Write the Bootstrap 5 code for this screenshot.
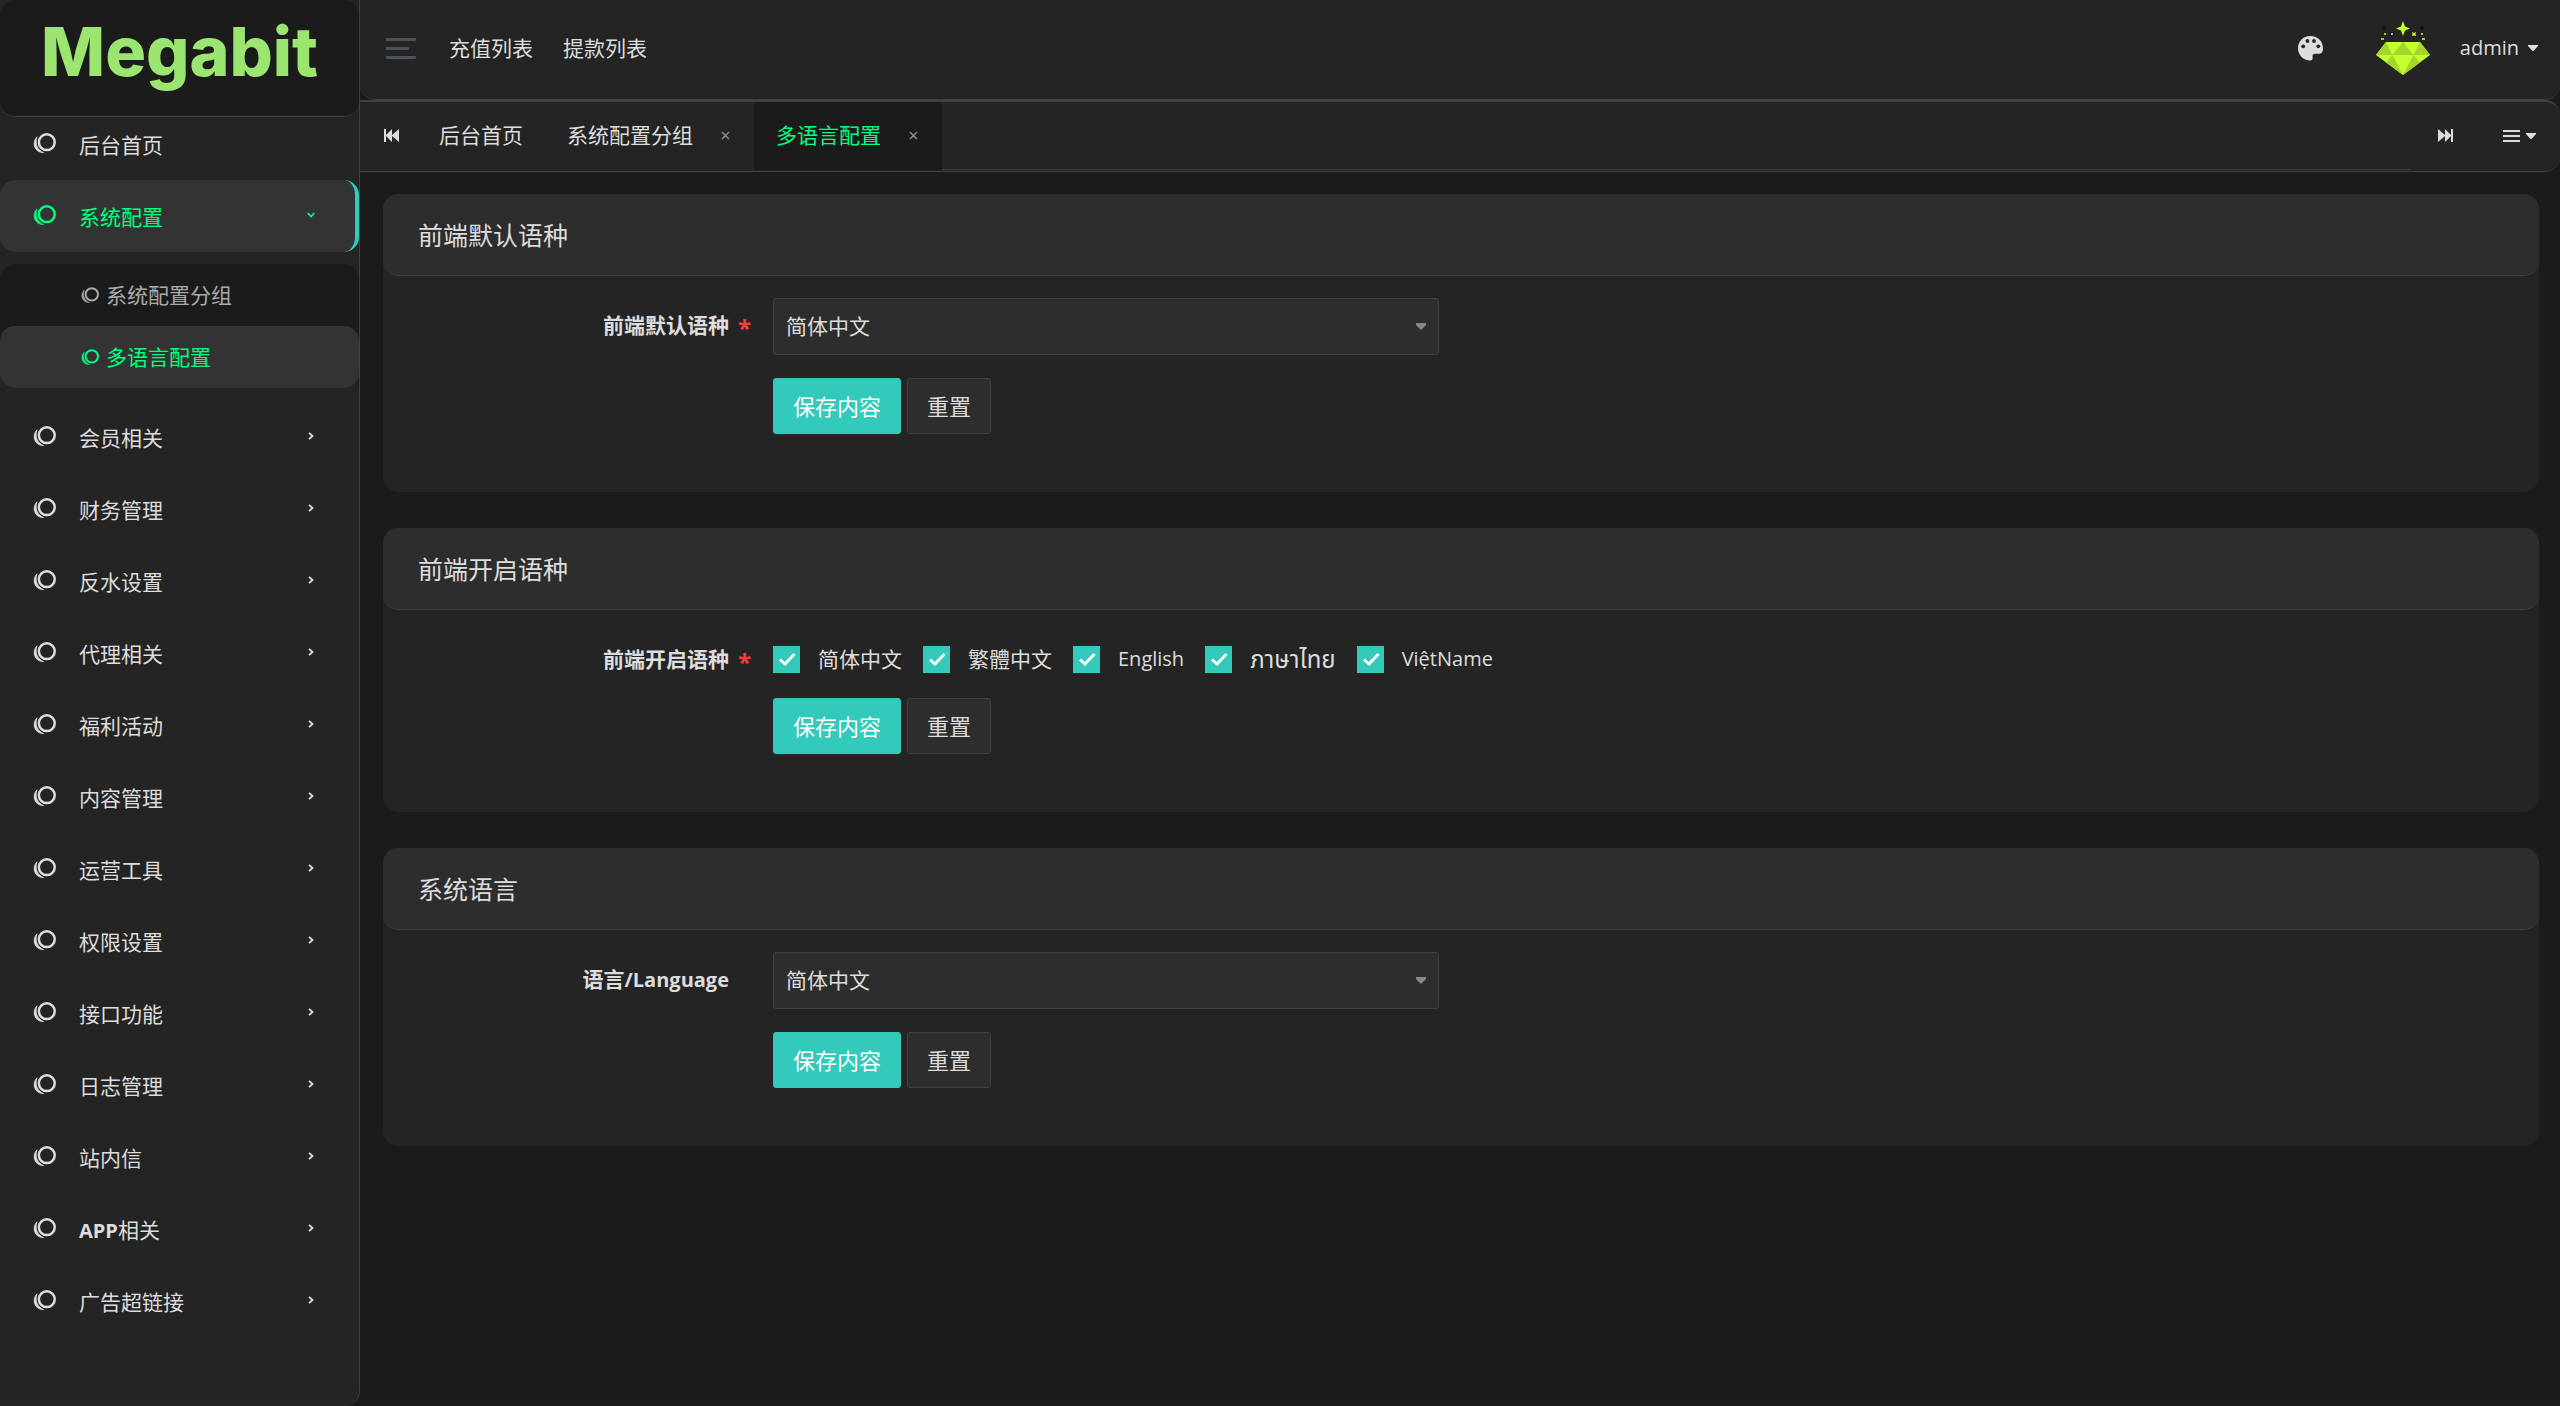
<!DOCTYPE html>
<html lang="zh-CN">
<head>
<meta charset="utf-8">
<meta name="viewport" content="width=device-width, initial-scale=1">
<title>多语言配置</title>
<link href="https://cdn.jsdelivr.net/npm/bootstrap@5.3.0/dist/css/bootstrap.min.css" rel="stylesheet">
<style>
:root{--page:#1b1b1b;--panel:#242424;--raised:#2d2d2d;--active:#333;--line:#404040;--ink:#ddd;--go:#00ff7f;--teal:#33cabb}
body{background:var(--page);color:var(--ink);font:21px/30px "Open Sans","Noto Sans CJK SC","Noto Sans Thai",sans-serif}
a{color:inherit;text-decoration:none}
svg{display:block;flex:none}
.latin{font-size:20px}
.thai{font-size:24px}
.side{width:360px;background:var(--panel);border-right:1px solid var(--line);border-bottom-right-radius:15px}
.brand{height:117px;margin-bottom:-9px;background:var(--page);border-bottom:1px solid var(--line);border-radius:15px;padding:0 0 14px 41px;color:#9be570;font:800 68px/1 Inter,sans-serif}
.menu-link{height:72px;padding:0 40px 2px 33px;border-right:4px solid transparent;border-radius:15px}
.menu-link .latin{font-weight:700}
.menu-link.current{background:var(--active);border-color:var(--teal);color:var(--go)}
.menu-link .label{margin-left:23px;padding-top:4px}
.submenu{background:var(--page);border-radius:15px;margin:12px 0 13px}
.sub-link{height:62px;padding-left:81px;gap:7px;color:#aaa;border-radius:15px}
.sub-link.current{background:var(--active);color:var(--go)}
.topbar{height:100px;background:var(--panel);border-bottom:1px solid var(--line);border-radius:0 0 15px 15px;padding:0 22px 3px 26px}
.top-links{gap:30px;margin-left:33px}
.top-tools{gap:30px}
.theme-link{margin-right:23px}
.user-toggle{gap:9px}
.tabbar{height:72px;background:var(--panel);border-top:2px solid var(--line);border-bottom:1px solid var(--line);border-radius:0 15px 15px 0;padding:0 24px}
.tabbar>.plain-btn{padding-bottom:2px}
.tab-scroll{margin:0 28px 0 18px}
.tab-rest{border-bottom:1px solid var(--line);margin-bottom:1px}
.tab-item{padding:0 22px 3px}
.tab-item.current{background:var(--page);margin-bottom:1px}
.tab-item.current a{color:var(--go)}
.tab-item .tab-close{color:#999;width:13px;margin-left:26px;font-size:18px}
.tab-menu{gap:6px;margin-left:50px}
.plain-btn{background:none;border:0;padding:0;color:inherit}
.panels{padding:22px 21px 36px 23px;gap:36px}
.panel-card{background:var(--panel);border-radius:15px}
.panel-head{height:82px;background:var(--raised);border-bottom:1px solid var(--line);border-radius:15px;padding:0 35px;font-size:25px;font-weight:400;margin:0}
.panel-form{padding:22px 13px 58px}
.panel-form .row{--bs-gutter-x:44px;margin:0}
.field-label{font-weight:700;text-align:right;padding-top:12px;position:relative}
.required-mark{position:absolute;right:0;top:15px;color:#ff3b3b;font-size:24px}
.form-select.lang{height:57px;background-color:var(--raised);border:1px solid var(--line);border-radius:3px;color:var(--ink);font-size:21px;padding:1px 40px 0 12px;background-image:url("data:image/svg+xml,%3Csvg xmlns='http://www.w3.org/2000/svg' viewBox='0 0 10 7'%3E%3Cpath fill='%23888' d='M0 0h10v2L5 7L0 2z'/%3E%3C/svg%3E");background-size:10px 7px;background-position:right 12px center}
.actions{gap:6px;margin-top:23px}
.actions .btn{height:56px;padding:0 19px;border-radius:3px;font-size:22px;line-height:30px}
.btn-save{background:var(--teal);border-color:var(--teal);color:#fff}
.btn-reset{background:var(--raised);border-color:var(--line);color:var(--ink)}
.checks{height:43px;gap:21px}
.check-item{gap:18px;padding-top:11px}
.check-item .form-check-input{width:27px;height:27px;margin:0;border-radius:0;border:0;background-color:#444}
.check-item .form-check-input:checked{background-color:var(--teal);background-size:27px 27px;background-image:url("data:image/svg+xml,%3Csvg xmlns='http://www.w3.org/2000/svg' viewBox='0 0 27 27'%3E%3Cpath fill='none' stroke='%23fff' stroke-width='3' d='M7 13.500l5 4.500L21.500 8'/%3E%3C/svg%3E")}
</style>
</head>
<body>
<svg width="0" height="0" class="position-absolute" aria-hidden="true">
  <symbol id="rings" viewBox="0 0 23 20"><circle cx="13.800" cy="9.200" r="7.900" fill="none" stroke="currentColor" stroke-width="2.500"/><path d="M4 3.800C-1.500 9.500 1 19.500 10.800 19.800C5 17 1.500 11.500 4 3.800Z" fill="currentColor" stroke="currentColor" stroke-width=".7"/></symbol>
  <symbol id="chev" viewBox="0 0 8 8"><path d="M2 .8L5.500 4L2 7.200" fill="none" stroke="currentColor" stroke-width="1.800"/></symbol>
  <symbol id="chev-down" viewBox="0 0 8 8"><path d="M.8 2L4 5.500L7.200 2" fill="none" stroke="currentColor" stroke-width="1.800"/></symbol>
  <symbol id="caret" viewBox="0 0 10 6"><path d="M0 0H10V1L5.500 6H4.500L0 1Z" fill="currentColor"/></symbol>
</svg>
<div class="d-flex min-vh-100">
  <nav class="side flex-shrink-0">
    <a class="brand d-flex align-items-center position-relative" href="#">Megabit</a>
    <a class="menu-link d-flex align-items-center" href="#"><svg width="23" height="20"><use href="#rings"/></svg><span class="label">后台首页</span></a>
    <a class="menu-link current d-flex align-items-center" href="#"><svg width="23" height="20"><use href="#rings"/></svg><span class="label me-auto">系统配置</span><svg width="8" height="8"><use href="#chev-down"/></svg></a>
    <div class="submenu">
      <a class="sub-link d-flex align-items-center" href="#"><svg width="18" height="16"><use href="#rings"/></svg>系统配置分组</a>
      <a class="sub-link current d-flex align-items-center" href="#"><svg width="18" height="16"><use href="#rings"/></svg>多语言配置</a>
    </div>
    <a class="menu-link d-flex align-items-center" href="#"><svg width="23" height="20"><use href="#rings"/></svg><span class="label me-auto">会员相关</span><svg width="8" height="8"><use href="#chev"/></svg></a>
    <a class="menu-link d-flex align-items-center" href="#"><svg width="23" height="20"><use href="#rings"/></svg><span class="label me-auto">财务管理</span><svg width="8" height="8"><use href="#chev"/></svg></a>
    <a class="menu-link d-flex align-items-center" href="#"><svg width="23" height="20"><use href="#rings"/></svg><span class="label me-auto">反水设置</span><svg width="8" height="8"><use href="#chev"/></svg></a>
    <a class="menu-link d-flex align-items-center" href="#"><svg width="23" height="20"><use href="#rings"/></svg><span class="label me-auto">代理相关</span><svg width="8" height="8"><use href="#chev"/></svg></a>
    <a class="menu-link d-flex align-items-center" href="#"><svg width="23" height="20"><use href="#rings"/></svg><span class="label me-auto">福利活动</span><svg width="8" height="8"><use href="#chev"/></svg></a>
    <a class="menu-link d-flex align-items-center" href="#"><svg width="23" height="20"><use href="#rings"/></svg><span class="label me-auto">内容管理</span><svg width="8" height="8"><use href="#chev"/></svg></a>
    <a class="menu-link d-flex align-items-center" href="#"><svg width="23" height="20"><use href="#rings"/></svg><span class="label me-auto">运营工具</span><svg width="8" height="8"><use href="#chev"/></svg></a>
    <a class="menu-link d-flex align-items-center" href="#"><svg width="23" height="20"><use href="#rings"/></svg><span class="label me-auto">权限设置</span><svg width="8" height="8"><use href="#chev"/></svg></a>
    <a class="menu-link d-flex align-items-center" href="#"><svg width="23" height="20"><use href="#rings"/></svg><span class="label me-auto">接口功能</span><svg width="8" height="8"><use href="#chev"/></svg></a>
    <a class="menu-link d-flex align-items-center" href="#"><svg width="23" height="20"><use href="#rings"/></svg><span class="label me-auto">日志管理</span><svg width="8" height="8"><use href="#chev"/></svg></a>
    <a class="menu-link d-flex align-items-center" href="#"><svg width="23" height="20"><use href="#rings"/></svg><span class="label me-auto">站内信</span><svg width="8" height="8"><use href="#chev"/></svg></a>
    <a class="menu-link d-flex align-items-center" href="#"><svg width="23" height="20"><use href="#rings"/></svg><span class="label me-auto"><span class="latin">APP</span>相关</span><svg width="8" height="8"><use href="#chev"/></svg></a>
    <a class="menu-link d-flex align-items-center" href="#"><svg width="23" height="20"><use href="#rings"/></svg><span class="label me-auto">广告超链接</span><svg width="8" height="8"><use href="#chev"/></svg></a>
  </nav>
  <div class="flex-grow-1">
    <header class="topbar d-flex align-items-center">
      <button class="plain-btn" type="button" aria-label="菜单"><svg width="30" height="21" viewBox="0 0 30 21" fill="#4b525a"><rect width="30" height="3" rx="1"/><rect y="9" width="23" height="3" rx="1"/><rect y="18" width="30" height="3" rx="1"/></svg></button>
      <nav class="top-links d-flex"><a href="#">充值列表</a><a href="#">提款列表</a></nav>
      <div class="top-tools d-flex align-items-center ms-auto">
        <a class="theme-link" href="#" aria-label="主题"><svg width="25" height="25" viewBox="0 0 25 25"><path fill="#ddd" d="M12.500 0C5 0 0 5.500 0 12.300S5.500 24.500 12 24.500c2.400 0 2.800-1.200 2.600-2.800c-.4-2.600.2-4 2.500-4H21c2.600 0 4-2 4-5C25 5 19.500 0 12.500 0Z"/><g fill="#242424"><circle cx="5.200" cy="10.300" r="1.900"/><circle cx="9.500" cy="5" r="1.900"/><circle cx="16" cy="5" r="1.900"/><circle cx="20.300" cy="10.300" r="1.900"/></g></svg></a>
        <svg width="54" height="54" viewBox="0 0 54 54" aria-hidden="true">
          <path fill="#c5ff2e" d="M10 21H44L54 34L27 54L0 34Z"/>
          <path fill="#a4d62b" d="M10 21H27L16.500 34ZM27 21H44L37.500 34ZM10 21L0 34H16.500ZM44 21L37.500 34H54ZM10 41.500L16.500 34L27 54ZM44 41.500L37.500 34L27 54Z"/>
          <path fill="#c5ff2e" d="M10 21H27L16.500 34ZM44 21H27L37.500 34Z"/>
          <path fill="#a4d62b" d="M27 21L16.500 34H37.500Z"/>
          <path fill="#c5ff2e" d="M27 0L29 5.500L34 7.500L29 9.500L27 15L25 9.500L20 7.500L25 5.500ZM36 11l2 1l2-1l-.5 2l.5 2l-2-.5l-2 .5l.5-2Z"/>
          <g fill="#9bcc2a"><rect x="8" y="12" width="2" height="2"/><rect x="45" y="12" width="2" height="2"/><rect x="5" y="17" width="3" height="2"/><rect x="46" y="17" width="3" height="2"/></g>
          <path fill="#111" d="M8 4l1 2l2 1l-2 1l-1 2l-1-2l-2-1l2-1ZM46 4l1 2l2 1l-2 1l-1 2l-1-2l-2-1l2-1ZM14 11h4v4h-4Z"/><circle cx="16" cy="13" r="1" fill="#eee"/>
        </svg>
        <button class="plain-btn user-toggle d-flex align-items-center" type="button"><span class="latin">admin</span><svg width="10" height="6"><use href="#caret"/></svg></button>
      </div>
    </header>
    <div class="tabbar d-flex align-items-stretch">
      <button class="plain-btn" type="button" aria-label="向左"><svg width="15" height="13" viewBox="0 0 15 13" fill="#ddd"><path d="M0 0H2V6L8 0V6L15 0V13L8 7V13L2 7V13H0Z"/></svg></button>
      <nav class="tab-scroll d-flex flex-grow-1">
        <a class="tab-item d-flex align-items-center" href="#">后台首页</a>
        <div class="tab-item d-flex align-items-center"><a href="#">系统配置分组</a><button class="plain-btn tab-close" type="button" aria-label="关闭">×</button></div>
        <div class="tab-item current d-flex align-items-center"><a href="#">多语言配置</a><button class="plain-btn tab-close" type="button" aria-label="关闭">×</button></div>
        <div class="tab-rest flex-grow-1"></div>
      </nav>
      <button class="plain-btn" type="button" aria-label="向右"><svg width="15" height="13" viewBox="0 0 15 13" fill="#ddd"><path d="M15 0H13V6L7 0V6L0 0V13L7 7V13L13 7V13H15Z"/></svg></button>
      <button class="plain-btn tab-menu d-flex align-items-center" type="button" aria-label="标签操作"><svg width="17" height="12" viewBox="0 0 17 12" fill="#ddd"><path d="M0 0H17V2H0ZM0 5H17V7H0ZM0 10H17V12H0Z"/></svg><svg width="10" height="6"><use href="#caret"/></svg></button>
    </div>
    <main class="panels d-flex flex-column">
      <section class="panel-card">
        <h2 class="panel-head d-flex align-items-center">前端默认语种</h2>
        <form class="panel-form">
          <div class="row"><label class="col-2 field-label" for="defaultLang">前端默认语种<span class="required-mark">*</span></label>
            <div class="col-4"><select class="form-select lang" id="defaultLang"><option>简体中文</option></select></div></div>
          <div class="row"><div class="col-4 offset-2 actions d-flex"><button class="btn btn-save" type="button">保存内容</button><button class="btn btn-reset" type="reset">重置</button></div></div>
        </form>
      </section>
      <section class="panel-card">
        <h2 class="panel-head d-flex align-items-center">前端开启语种</h2>
        <form class="panel-form">
          <div class="row" role="group" aria-labelledby="enabledLangs"><span class="col-2 field-label" id="enabledLangs">前端开启语种<span class="required-mark">*</span></span>
            <div class="col-10 checks d-flex">
              <label class="check-item d-flex align-items-center"><input class="form-check-input" type="checkbox" checked><span>简体中文</span></label>
              <label class="check-item d-flex align-items-center"><input class="form-check-input" type="checkbox" checked><span>繁體中文</span></label>
              <label class="check-item d-flex align-items-center"><input class="form-check-input" type="checkbox" checked><span class="latin">English</span></label>
              <label class="check-item d-flex align-items-center"><input class="form-check-input" type="checkbox" checked><span class="thai">ภาษาไทย</span></label>
              <label class="check-item d-flex align-items-center"><input class="form-check-input" type="checkbox" checked><span class="latin">ViệtName</span></label>
            </div></div>
          <div class="row"><div class="col-4 offset-2 actions d-flex"><button class="btn btn-save" type="button">保存内容</button><button class="btn btn-reset" type="reset">重置</button></div></div>
        </form>
      </section>
      <section class="panel-card">
        <h2 class="panel-head d-flex align-items-center">系统语言</h2>
        <form class="panel-form">
          <div class="row"><label class="col-2 field-label" for="systemLang">语言<span class="latin">/Language</span></label>
            <div class="col-4"><select class="form-select lang" id="systemLang"><option>简体中文</option></select></div></div>
          <div class="row"><div class="col-4 offset-2 actions d-flex"><button class="btn btn-save" type="button">保存内容</button><button class="btn btn-reset" type="reset">重置</button></div></div>
        </form>
      </section>
    </main>
  </div>
</div>
<script src="https://cdn.jsdelivr.net/npm/bootstrap@5.3.0/dist/js/bootstrap.bundle.min.js"></script>
</body>
</html>
